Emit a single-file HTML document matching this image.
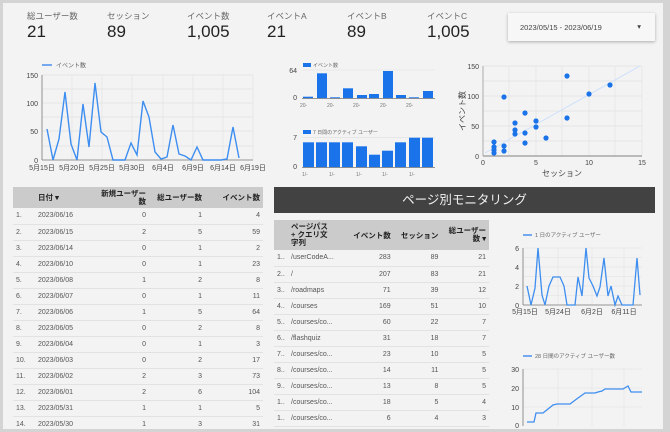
<!DOCTYPE html>
<html><head><meta charset="utf-8"><style>
*{margin:0;padding:0;box-sizing:border-box}
body{width:670px;height:432px;overflow:hidden;background:#d4d4d4;font-family:"Liberation Sans","Noto Sans CJK JP",sans-serif;color:#222}
#f{position:absolute;left:3px;top:3px;width:660px;height:426px;background:#f3f3f3;overflow:hidden}
.a{position:absolute;white-space:nowrap}
.kl{font-size:8.5px;color:#666}
.kv{font-size:17px;color:#222}
table{border-collapse:collapse;font-size:7px;color:#555}
td{height:16px;border-bottom:1px solid #e2e2e2;padding:0 3px}
th{background:#cbcbcb;color:#222;font-size:7.5px;font-weight:bold;padding:0 3px;text-align:right}
.r{text-align:right}
svg text{font-family:"Liberation Sans","Noto Sans CJK JP",sans-serif}
</style></head><body><div id="f">
<div class="a kl" style="left:24px;top:7px">総ユーザー数</div><div class="a kv" style="left:24px;top:19px">21</div>
<div class="a kl" style="left:104px;top:7px">セッション</div><div class="a kv" style="left:104px;top:19px">89</div>
<div class="a kl" style="left:184px;top:7px">イベント数</div><div class="a kv" style="left:184px;top:19px">1,005</div>
<div class="a kl" style="left:264px;top:7px">イベントA</div><div class="a kv" style="left:264px;top:19px">21</div>
<div class="a kl" style="left:344px;top:7px">イベントB</div><div class="a kv" style="left:344px;top:19px">89</div>
<div class="a kl" style="left:424px;top:7px">イベントC</div><div class="a kv" style="left:424px;top:19px">1,005</div>
<div class="a" style="left:505px;top:10px;width:147px;height:28px;background:#f7f7f7;box-shadow:0 1px 3px rgba(0,0,0,.3);font-size:7.5px;color:#444;padding:10px 0 0 12px">2023/05/15 - 2023/06/19<span style="position:absolute;right:14px;top:9px">▾</span></div>

<svg class="a" style="left:0;top:0" width="660" height="426" viewBox="3 3 660 426">
<g font-size="7" fill="#444">
<line x1="42" y1="65" x2="52" y2="65" stroke="#4a90f2" stroke-width="1.5"/><text x="56" y="67.5" font-size="6" fill="#666">イベント数</text>
<g stroke="#e2e2e2" stroke-width=".7">
<line x1="42" y1="75" x2="253" y2="75"/><line x1="42" y1="89" x2="253" y2="89"/><line x1="42" y1="103" x2="253" y2="103"/><line x1="42" y1="117" x2="253" y2="117"/><line x1="42" y1="131" x2="253" y2="131"/><line x1="42" y1="146" x2="253" y2="146"/>
<line x1="72" y1="75" x2="72" y2="160"/><line x1="102" y1="75" x2="102" y2="160"/><line x1="132" y1="75" x2="132" y2="160"/><line x1="163" y1="75" x2="163" y2="160"/><line x1="193" y1="75" x2="193" y2="160"/><line x1="223" y1="75" x2="223" y2="160"/><line x1="253" y1="75" x2="253" y2="160"/></g>
<line x1="42" y1="75" x2="42" y2="160" stroke="#777" stroke-width=".8"/><line x1="42" y1="160" x2="253" y2="160" stroke="#777" stroke-width=".8"/>
<text x="38" y="78" text-anchor="end">150</text><text x="38" y="106" text-anchor="end">100</text><text x="38" y="134" text-anchor="end">50</text><text x="38" y="163" text-anchor="end">0</text>
<g text-anchor="middle"><text x="42" y="170">5月15日</text><text x="72" y="170">5月20日</text><text x="102" y="170">5月25日</text><text x="132" y="170">5月30日</text><text x="163" y="170">6月4日</text><text x="193" y="170">6月9日</text><text x="223" y="170">6月14日</text><text x="253" y="170">6月19日</text></g>
<polyline fill="none" stroke="#3d8ef0" stroke-width="1.4" points="47,129 53,160 59,139 65,92 71,144 77,160 83,104 89,147 95,83 101,132 107,137 113,160 119,160 125,160 131,143 137,155 143,101 149,117 155,152 161,159 167,157 173,125 179,154 185,156 191,160 197,147 203,160 209,160 215,160 221,160 227,159 233,127 239,158"/>
<rect x="303" y="63" width="8" height="4" fill="#1a73e8"/><text x="313" y="67" font-size="5" fill="#666">イベント数</text>
<line x1="302" y1="70" x2="435" y2="70" stroke="#ddd" stroke-width=".6"/>
<text x="297" y="73" text-anchor="end">64</text><text x="297" y="100" text-anchor="end">0</text>
<g fill="#1a73e8"><rect x="303" y="96.7" width="10" height="1.6"/><rect x="317" y="73.3" width="10" height="25"/><rect x="330" y="97.3" width="10" height="1"/><rect x="343" y="88.3" width="10" height="10"/><rect x="357" y="95" width="10" height="3.3"/><rect x="369" y="94" width="10" height="4.3"/><rect x="383" y="71" width="10" height="27.3"/><rect x="396" y="95" width="10" height="3.3"/><rect x="409" y="97.3" width="10" height="1"/><rect x="423" y="91" width="10" height="7.3"/></g>
<line x1="302" y1="98.5" x2="435" y2="98.5" stroke="#777" stroke-width=".7"/>
<g font-size="5" fill="#777"><text x="300" y="107">20-</text><text x="327" y="107">20-</text><text x="353" y="107">20-</text><text x="380" y="107">20-</text><text x="406" y="107">20-</text></g>
<rect x="303" y="130" width="8" height="4" fill="#1a73e8"/><text x="313" y="134" font-size="5" fill="#666">7 日間のアクティブ ユーザー</text>
<line x1="302" y1="137.7" x2="435" y2="137.7" stroke="#ddd" stroke-width=".6"/>
<text x="297" y="140" text-anchor="end">7</text><text x="297" y="169" text-anchor="end">0</text>
<g fill="#1a73e8"><rect x="303" y="142.3" width="11" height="25"/><rect x="316" y="142.3" width="11" height="25"/><rect x="329" y="142.3" width="11" height="25"/><rect x="342" y="142.3" width="11" height="25"/><rect x="356" y="146.3" width="11" height="21"/><rect x="369" y="154.7" width="11" height="12.6"/><rect x="382" y="150.7" width="11" height="16.6"/><rect x="395" y="142.3" width="11" height="25"/><rect x="409" y="137.7" width="11" height="29.6"/><rect x="422" y="137.7" width="11" height="29.6"/></g>
<line x1="302" y1="167.5" x2="435" y2="167.5" stroke="#777" stroke-width=".7"/>
<g font-size="5" fill="#777"><text x="302" y="176">1/-</text><text x="329" y="176">1/-</text><text x="356" y="176">1/-</text><text x="382" y="176">1/-</text><text x="409" y="176">1/-</text></g>
<g stroke="#e2e2e2" stroke-width=".7"><line x1="483" y1="66" x2="642" y2="66"/><line x1="483" y1="81" x2="642" y2="81"/><line x1="483" y1="96" x2="642" y2="96"/><line x1="483" y1="111" x2="642" y2="111"/><line x1="483" y1="126" x2="642" y2="126"/><line x1="483" y1="141" x2="642" y2="141"/><line x1="536" y1="66" x2="536" y2="156"/><line x1="589" y1="66" x2="589" y2="156"/><line x1="642" y1="66" x2="642" y2="156"/><line x1="509" y1="66" x2="509" y2="156"/><line x1="562" y1="66" x2="562" y2="156"/><line x1="615" y1="66" x2="615" y2="156"/></g>
<line x1="483" y1="66" x2="483" y2="156" stroke="#999" stroke-width=".8"/><line x1="483" y1="156" x2="642" y2="156" stroke="#999" stroke-width="1.2"/>
<line x1="485" y1="153" x2="640" y2="66" stroke="#cfe1fb" stroke-width="1"/>
<text x="479" y="69" text-anchor="end">150</text><text x="479" y="99" text-anchor="end">100</text><text x="479" y="129" text-anchor="end">50</text><text x="479" y="159" text-anchor="end">0</text>
<g text-anchor="middle"><text x="483" y="165">0</text><text x="536" y="165">5</text><text x="589" y="165">10</text><text x="642" y="165">15</text></g>
<text x="562" y="176" text-anchor="middle" font-size="8">セッション</text>
<text transform="translate(465,111) rotate(-90)" text-anchor="middle" font-size="8">イベント数</text>
<g fill="#1a73e8"><circle cx="494" cy="142" r="2.6"/><circle cx="494" cy="147" r="2.6"/><circle cx="494" cy="150" r="2.6"/><circle cx="494" cy="153" r="2.6"/><circle cx="504" cy="97" r="2.6"/><circle cx="504" cy="146" r="2.6"/><circle cx="504" cy="151" r="2.6"/><circle cx="515" cy="123" r="2.6"/><circle cx="515" cy="130" r="2.6"/><circle cx="515" cy="134" r="2.6"/><circle cx="525" cy="113" r="2.6"/><circle cx="525" cy="133" r="2.6"/><circle cx="525" cy="143" r="2.6"/><circle cx="536" cy="121" r="2.6"/><circle cx="536" cy="127" r="2.6"/><circle cx="546" cy="138" r="2.6"/><circle cx="567" cy="76" r="2.6"/><circle cx="567" cy="118" r="2.6"/><circle cx="589" cy="94" r="2.6"/><circle cx="610" cy="85" r="2.6"/></g>
<line x1="523" y1="235" x2="532" y2="235" stroke="#4a90f2" stroke-width="1.5"/><text x="535" y="237" font-size="5.5" fill="#666">1 日のアクティブ ユーザー</text>
<g stroke="#e2e2e2" stroke-width=".6"><line x1="523" y1="248" x2="642" y2="248"/><line x1="523" y1="257.5" x2="642" y2="257.5"/><line x1="523" y1="267" x2="642" y2="267"/><line x1="523" y1="276.5" x2="642" y2="276.5"/><line x1="523" y1="286" x2="642" y2="286"/><line x1="523" y1="295.5" x2="642" y2="295.5"/><line x1="558" y1="248" x2="558" y2="305"/><line x1="592" y1="248" x2="592" y2="305"/><line x1="624" y1="248" x2="624" y2="305"/></g>
<line x1="523" y1="248" x2="523" y2="305" stroke="#777" stroke-width=".8"/><line x1="523" y1="305" x2="642" y2="305" stroke="#777" stroke-width=".8"/>
<text x="519" y="251" text-anchor="end">6</text><text x="519" y="270" text-anchor="end">4</text><text x="519" y="289" text-anchor="end">2</text><text x="519" y="308" text-anchor="end">0</text>
<g text-anchor="middle"><text x="525" y="314">5月15日</text><text x="558" y="314">5月24日</text><text x="592" y="314">6月2日</text><text x="624" y="314">6月11日</text></g>
<polyline fill="none" stroke="#3d8ef0" stroke-width="1.3" points="527,286 531,305 535,288 538,248 542,295 545,305 549,286 553,277 560,277 564,286 567,305 575,305 578,277 582,296 586,248 589,278 593,286 597,296 600,287 604,258 608,296 611,286 615,305 618,296 622,305 633,305 637,258 640,295"/>
<line x1="523" y1="356" x2="532" y2="356" stroke="#4a90f2" stroke-width="1.5"/><text x="535" y="358" font-size="5.5" fill="#666">28 日間のアクティブ ユーザー数</text>
<g stroke="#e2e2e2" stroke-width=".6"><line x1="523" y1="369" x2="642" y2="369"/><line x1="523" y1="388" x2="642" y2="388"/><line x1="523" y1="407" x2="642" y2="407"/><line x1="558" y1="369" x2="558" y2="426"/><line x1="592" y1="369" x2="592" y2="426"/><line x1="624" y1="369" x2="624" y2="426"/></g>
<line x1="523" y1="369" x2="523" y2="426" stroke="#777" stroke-width=".8"/>
<text x="519" y="372" text-anchor="end">30</text><text x="519" y="391" text-anchor="end">20</text><text x="519" y="410" text-anchor="end">10</text><text x="519" y="428" text-anchor="end">0</text>
<polyline fill="none" stroke="#3d8ef0" stroke-width="1.3" points="527,422 534,422 536,413 543,413 553,405 557,404 570,404 578,398 585,393 595,393 598,392 602,391 605,389 623,389 628,386 631,392 642,392"/>
</g></svg>

<table class="a" style="left:10px;top:184px;width:250px">
<tr style="height:21px"><th style="width:22px"></th><th style="text-align:left;width:56px">日付 ▾</th><th style="width:58px;line-height:8px">新規ユーザー<br>数</th><th style="width:56px">総ユーザー数</th><th>イベント数</th></tr>
<tr><td>1.</td><td>2023/06/16</td><td class="r">0</td><td class="r">1</td><td class="r">4</td></tr>
<tr><td>2.</td><td>2023/06/15</td><td class="r">2</td><td class="r">5</td><td class="r">59</td></tr>
<tr><td>3.</td><td>2023/06/14</td><td class="r">0</td><td class="r">1</td><td class="r">2</td></tr>
<tr><td>4.</td><td>2023/06/10</td><td class="r">0</td><td class="r">1</td><td class="r">23</td></tr>
<tr><td>5.</td><td>2023/06/08</td><td class="r">1</td><td class="r">2</td><td class="r">8</td></tr>
<tr><td>6.</td><td>2023/06/07</td><td class="r">0</td><td class="r">1</td><td class="r">11</td></tr>
<tr><td>7.</td><td>2023/06/06</td><td class="r">1</td><td class="r">5</td><td class="r">64</td></tr>
<tr><td>8.</td><td>2023/06/05</td><td class="r">0</td><td class="r">2</td><td class="r">8</td></tr>
<tr><td>9.</td><td>2023/06/04</td><td class="r">0</td><td class="r">1</td><td class="r">3</td></tr>
<tr><td>10.</td><td>2023/06/03</td><td class="r">0</td><td class="r">2</td><td class="r">17</td></tr>
<tr><td>11.</td><td>2023/06/02</td><td class="r">2</td><td class="r">3</td><td class="r">73</td></tr>
<tr><td>12.</td><td>2023/06/01</td><td class="r">2</td><td class="r">6</td><td class="r">104</td></tr>
<tr><td>13.</td><td>2023/05/31</td><td class="r">1</td><td class="r">1</td><td class="r">5</td></tr>
<tr><td>14.</td><td>2023/05/30</td><td class="r">1</td><td class="r">3</td><td class="r">31</td></tr>
</table>

<div class="a" style="left:271px;top:184px;width:381px;height:26px;background:#424242;color:#f0f0f0;font-size:12.5px;text-align:center;line-height:26px">ページ別モニタリング</div>

<table class="a" style="left:271px;top:217px;width:215px">
<tr style="height:30px"><th style="width:14px"></th><th style="text-align:left;width:58px;line-height:8px">ページパス<br>+ クエリ文<br>字列</th><th>イベント数</th><th>セッション</th><th style="line-height:8px">総ユーザー<br>数 ▾</th></tr>
<tr><td>1..</td><td>/userCodeA...</td><td class="r">283</td><td class="r">89</td><td class="r">21</td></tr>
<tr><td>2..</td><td>/</td><td class="r">207</td><td class="r">83</td><td class="r">21</td></tr>
<tr><td>3..</td><td>/roadmaps</td><td class="r">71</td><td class="r">39</td><td class="r">12</td></tr>
<tr><td>4..</td><td>/courses</td><td class="r">169</td><td class="r">51</td><td class="r">10</td></tr>
<tr><td>5..</td><td>/courses/co...</td><td class="r">60</td><td class="r">22</td><td class="r">7</td></tr>
<tr><td>6..</td><td>/flashquiz</td><td class="r">31</td><td class="r">18</td><td class="r">7</td></tr>
<tr><td>7..</td><td>/courses/co...</td><td class="r">23</td><td class="r">10</td><td class="r">5</td></tr>
<tr><td>8..</td><td>/courses/co...</td><td class="r">14</td><td class="r">11</td><td class="r">5</td></tr>
<tr><td>9..</td><td>/courses/co...</td><td class="r">13</td><td class="r">8</td><td class="r">5</td></tr>
<tr><td>1..</td><td>/courses/co...</td><td class="r">18</td><td class="r">5</td><td class="r">4</td></tr>
<tr><td>1..</td><td>/courses/co...</td><td class="r">6</td><td class="r">4</td><td class="r">3</td></tr>
</table>
</div></body></html>
